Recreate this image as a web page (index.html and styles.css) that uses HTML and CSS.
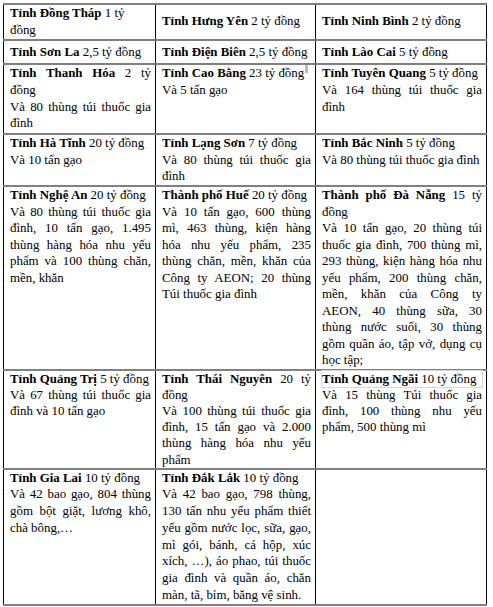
FILE: index.html
```html
<!DOCTYPE html>
<html lang="vi">
<head>
<meta charset="utf-8">
<title>Hỗ trợ các tỉnh</title>
<link rel="stylesheet" href="styles.css">
</head>
<body>
<table class="aid">
  <colgroup>
    <col class="c1">
    <col class="c2">
    <col class="c3">
  </colgroup>
  <tbody>
    <tr class="r-mid">
      <td class="left"><p><b>Tỉnh Đồng Tháp</b> 1 tỷ đồng</p></td>
      <td><p><b>Tỉnh Hưng Yên</b> 2 tỷ đồng</p></td>
      <td><p><b>Tỉnh Ninh Bình</b> 2 tỷ đồng</p></td>
    </tr>
    <tr class="r2">
      <td><p><b>Tỉnh Sơn La</b> 2,5 tỷ đồng</p></td>
      <td><p><b>Tỉnh Điện Biên</b> 2,5 tỷ đồng</p></td>
      <td><p><b>Tỉnh Lào Cai</b> 5 tỷ đồng</p></td>
    </tr>
    <tr>
      <td><p><b>Tỉnh Thanh Hóa</b> 2 tỷ đồng</p><p>Và 80 thùng túi thuốc gia đình</p></td>
      <td><p><b>Tỉnh Cao Bằng</b> 23 tỷ đồng<span class="mark"></span></p><p>Và 5 tấn gạo</p></td>
      <td><p><b>Tỉnh Tuyên Quang</b> 5 tỷ đồng</p><p>Và 164 thùng túi thuốc gia đình</p></td>
    </tr>
    <tr class="r4">
      <td><p><b>Tỉnh Hà Tĩnh</b> 20 tỷ đồng</p><p>Và 10 tấn gạo</p></td>
      <td><p><b>Tỉnh Lạng Sơn</b> 7 tỷ đồng</p><p>Và 80 thùng túi thuốc gia đình</p></td>
      <td><p><b>Tỉnh Bắc Ninh</b> 5 tỷ đồng</p><p>Và 80 thùng túi thuốc gia đình</p></td>
    </tr>
    <tr class="r5">
      <td><p><b>Tỉnh Nghệ An</b> 20 tỷ đồng</p><p>Và 80 thùng túi thuốc gia đình, 10 tấn gạo, 1.495 thùng hàng hóa nhu yếu phẩm và 100 thùng chăn, mền, khăn</p></td>
      <td><p><b>Thành phố Huế</b> 20 tỷ đồng</p><p>Và 10 tấn gạo, 600 thùng mì, 463 thùng, kiện hàng hóa nhu yếu phẩm, 235 thùng chăn, mền, khăn của Công ty AEON; 20 thùng Túi thuốc gia đình</p></td>
      <td><p><b>Thành phố Đà Nẵng</b> 15 tỷ đồng</p><p>Và 10 tấn gạo, 20 thùng túi thuốc gia đình, 700 thùng mì, 293 thùng, kiện hàng hóa nhu yếu phẩm, 200 thùng chăn, mền, khăn của Công ty AEON, 40 thùng sữa, 30 thùng nước suối, 30 thùng gồm quần áo, tập vở, dụng cụ học tập;</p></td>
    </tr>
    <tr class="r6">
      <td><p><b>Tỉnh Quảng Trị</b> 5 tỷ đồng</p><p>Và 67 thùng túi thuốc gia đình và 10 tấn gạo</p></td>
      <td><p><b>Tỉnh Thái Nguyên</b> 20 tỷ đồng</p><p>Và 100 thùng túi thuốc gia đình, 15 tấn gạo và 2.000 thùng hàng hóa nhu yếu phẩm</p></td>
      <td><p class="boxed"><b>Tỉnh Quảng Ngãi</b> 10 tỷ đồng</p><p>Và 15 thùng Túi thuốc gia đình, 100 thùng nhu yếu phẩm, 500 thùng mì</p></td>
    </tr>
    <tr class="r7">
      <td><p><b>Tỉnh Gia Lai</b> 10 tỷ đồng</p><p>Và 42 bao gạo, 804 thùng gồm bột giặt, lương khô, chà bông,…</p></td>
      <td><p><b>Tỉnh Đắk Lắk</b> 10 tỷ đồng</p><p>Và 42 bao gạo, 798 thùng, 130 tấn nhu yếu phẩm thiết yếu gồm nước lọc, sữa, gạo, mì gói, bánh, cá hộp, xúc xích, …), áo phao, túi thuốc gia đình và quần áo, chăn màn, tã, bỉm, băng vệ sinh.</p></td>
      <td></td>
    </tr>
  </tbody>
</table>
</body>
</html>
```

FILE: styles.css
```css
html, body {
  margin: 0;
  padding: 0;
  background: #ffffff;
}

body {
  padding: 3px 0 0 3px;
  font-family: "Liberation Serif", "DejaVu Serif", serif;
  font-size: 12.9px;
  line-height: 16.7px;
  color: #000000;
}

.aid {
  border-collapse: collapse;
  table-layout: fixed;
  width: 483px;
  font-family: "Liberation Serif", "DejaVu Serif", serif;
  font-size: 12.9px;
  line-height: 16.7px;
}

.c1 { width: 152px; }
.c2 { width: 160px; }
.c3 { width: 171px; }

.aid td {
  font-family: "Liberation Serif", "DejaVu Serif", serif;
  border-left: 1px solid #000000;
  border-right: 1px solid #000000;
  border-top: 2px solid #808080;
  border-bottom: 2px solid #808080;
  padding: 0 4px 1px 6px;
  vertical-align: top;
  text-align: justify;
}

.aid p {
  margin: 0;
}

.aid b {
  font-weight: bold;
}

.r-mid td {
  vertical-align: middle;
  padding-top: 0;
  padding-bottom: 1px;
}

.r2 td {
  padding-top: 3px;
  padding-bottom: 2px;
}

.r4 td {
  padding-bottom: 0;
}

.r5 td {
  padding-bottom: 0;
}

.r5 td p {
  line-height: 16.5px;
}

.r6 td {
  padding-bottom: 0;
}

.r6 td p {
  line-height: 16.2px;
}

.aid td.left {
  text-align: left;
}

.mark {
  display: inline-block;
  width: 3px;
  height: 8px;
  margin-left: 1px;
  background: #b8b8b8;
  vertical-align: 4px;
}

.boxed {
  outline: 1px solid #d8d8d8;
  outline-offset: 0;
}
```
